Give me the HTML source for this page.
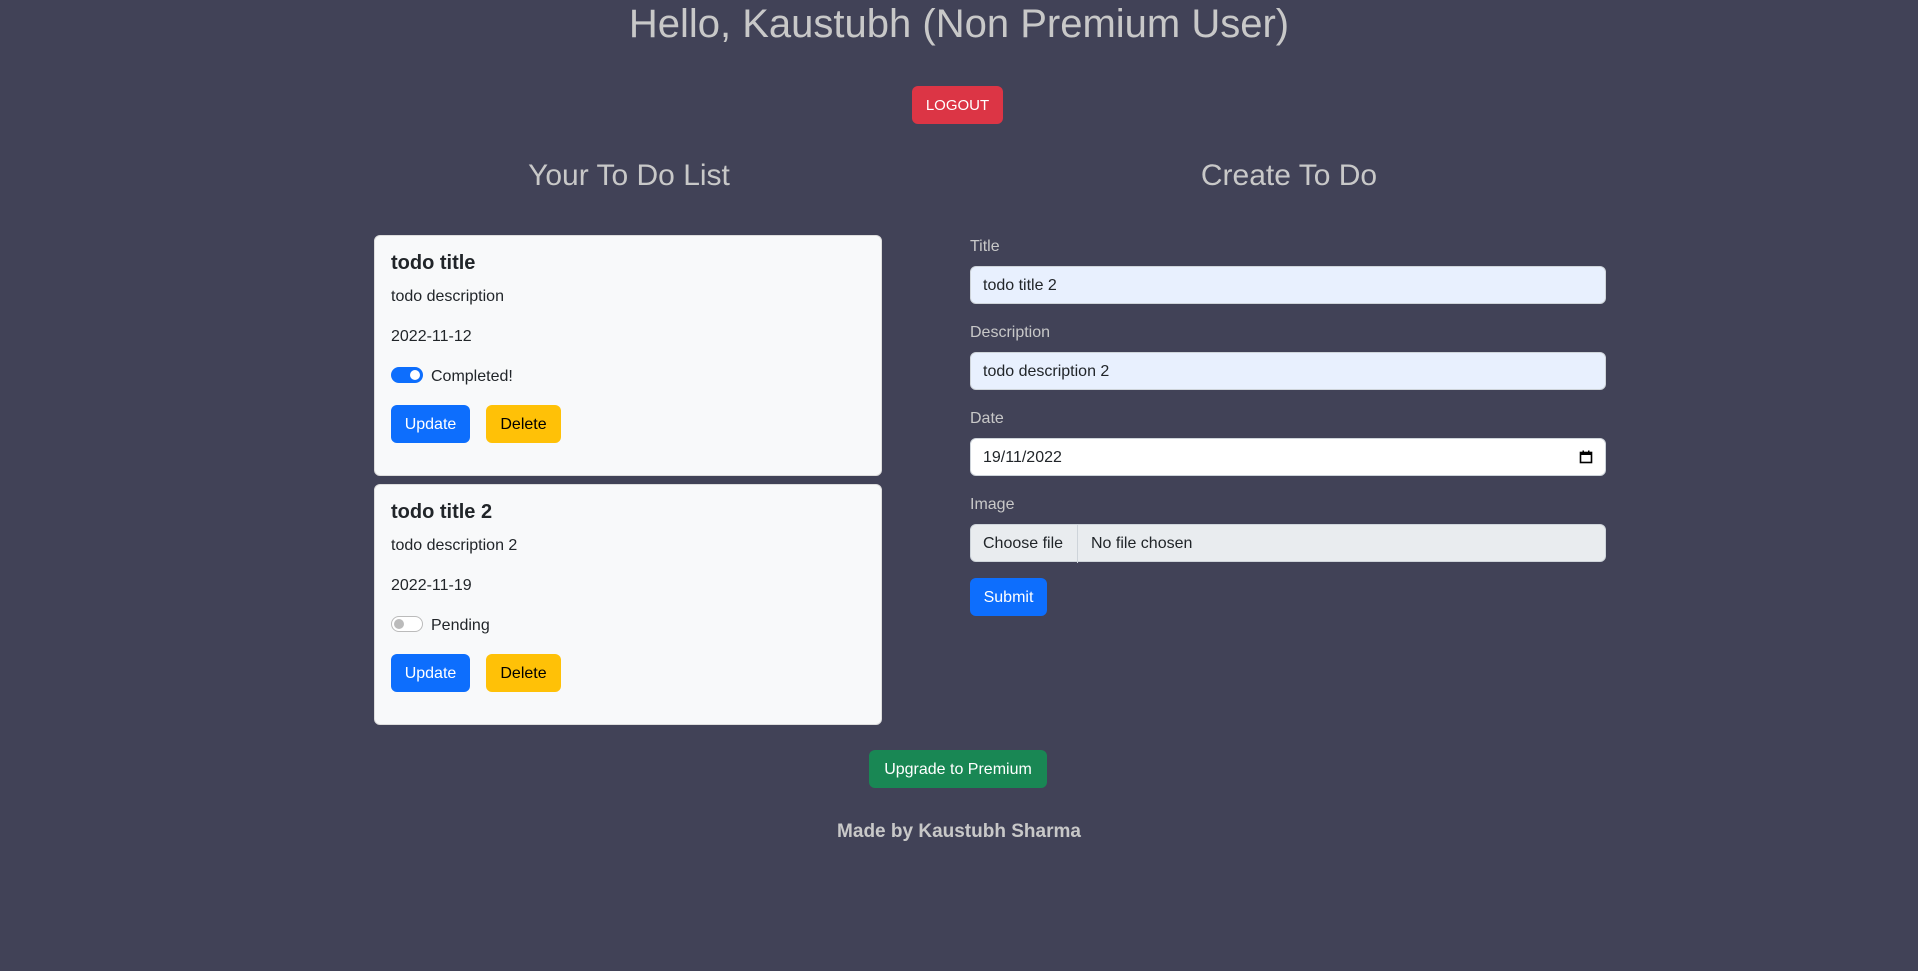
<!DOCTYPE html>
<html><head><meta charset="utf-8"><style>
*{box-sizing:border-box;margin:0;padding:0}
body{width:1918px;height:971px;background:#414257;font-family:"Liberation Sans",sans-serif;position:relative;overflow:hidden;color:#212529}
.a{position:absolute}
.c{text-align:center}
h1{position:absolute;left:0;width:1918px;top:1px;text-align:center;font-size:40px;font-weight:500;color:#c8c8c8;line-height:46px}
h2{position:absolute;font-size:30px;font-weight:500;color:#c8c8c8;text-align:center;line-height:36px}
.btn{position:absolute;border-radius:6px;font-size:16px;line-height:38px;height:38px;text-align:center;color:#fff}
.card{position:absolute;left:374px;width:508px;height:241px;background:#f8f9fa;border:1px solid #ddd;border-radius:6px}
.card .t{position:absolute;left:16px;top:16px;font-size:20px;font-weight:bold}
.card .d{position:absolute;left:16px;font-size:16px}
.sw{position:absolute;left:16px;top:131px;width:32px;height:16px;border-radius:8px}
.lab{position:absolute;left:970px;font-size:16px;color:#c8c8c8}
.inp{position:absolute;left:970px;width:636px;height:38px;border:1px solid #ced4da;border-radius:6px;font-size:16px;line-height:38px;padding-left:12px}
</style></head><body>
<h1>Hello, Kaustubh (Non Premium User)</h1>
<div class="btn" style="left:912px;top:86px;width:91px;background:#dc3545;font-size:15px;line-height:39px">LOGOUT</div>
<h2 style="left:299px;width:660px;top:158px">Your To Do List</h2>
<h2 style="left:959px;width:660px;top:158px">Create To Do</h2>

<div class="card" style="top:235px">
<div class="t">todo title</div>
<div class="d" style="top:52px">todo description</div>
<div class="d" style="top:92px">2022-11-12</div>
<div class="sw" style="background:#0d6efd"><div class="a" style="right:3px;top:3px;width:10px;height:10px;border-radius:5px;background:#fff"></div></div>
<div class="d" style="top:132px;left:56px">Completed!</div>
<div class="btn" style="left:16px;top:169px;width:79px;background:#0d6efd;line-height:40px">Update</div>
<div class="btn" style="left:111px;top:169px;width:75px;background:#ffc107;color:#000;line-height:40px">Delete</div>
</div>

<div class="card" style="top:484px">
<div class="t">todo title 2</div>
<div class="d" style="top:52px">todo description 2</div>
<div class="d" style="top:92px">2022-11-19</div>
<div class="sw" style="background:#fff;border:1px solid #bbb"><div class="a" style="left:2px;top:2px;width:10px;height:10px;border-radius:5px;background:#bbb"></div></div>
<div class="d" style="top:132px;left:56px">Pending</div>
<div class="btn" style="left:16px;top:169px;width:79px;background:#0d6efd;line-height:40px">Update</div>
<div class="btn" style="left:111px;top:169px;width:75px;background:#ffc107;color:#000;line-height:40px">Delete</div>
</div>

<div class="lab" style="top:238px">Title</div>
<div class="inp" style="top:266px;background:#e8f0fe">todo title 2</div>
<div class="lab" style="top:324px">Description</div>
<div class="inp" style="top:352px;background:#e8f0fe">todo description 2</div>
<div class="lab" style="top:410px">Date</div>
<div class="inp" style="top:438px;background:#fff">19/11/2022
<svg class="a" style="right:12px;top:11px" width="14" height="14" viewBox="0 0 14 14"><rect x="1.5" y="2.5" width="11" height="10" fill="none" stroke="#000" stroke-width="1.6"/><rect x="1" y="2" width="12" height="3" fill="#000"/><rect x="3.5" y="0.5" width="1.5" height="3" fill="#000"/><rect x="9" y="0.5" width="1.5" height="3" fill="#000"/></svg></div>
<div class="lab" style="top:496px">Image</div>
<div class="inp" style="top:524px;background:#e9ecef;padding-left:0"><span style="display:inline-block;width:107px;border-right:1px solid #ced4da;padding-left:12px">Choose file</span><span style="padding-left:13px">No file chosen</span></div>
<div class="btn" style="left:970px;top:578px;width:77px;background:#0d6efd;line-height:40px">Submit</div>

<div class="btn" style="left:869px;top:750px;width:178px;background:#198754;line-height:40px">Upgrade to Premium</div>
<div class="a c" style="left:0;width:1918px;top:821px;font-size:19px;font-weight:bold;color:#c8c8c8">Made by Kaustubh Sharma</div>
</body></html>
